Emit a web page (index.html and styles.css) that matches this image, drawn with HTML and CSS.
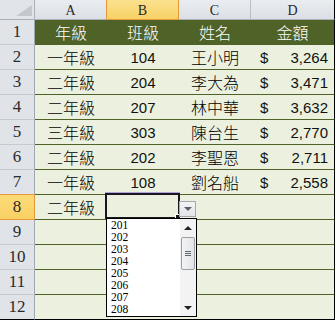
FILE: index.html
```html
<!DOCTYPE html>
<html lang="zh-Hant">
<head>
<meta charset="utf-8">
<title>Sheet</title>
<link rel="stylesheet" href="styles.css">
</head>
<body>
<div class="sheet">
  <div class="grid">
    <div class="corner"><svg width="34" height="19" viewBox="0 0 34 19"><polygon points="16,16 32,16 32,5" fill="#C3C8CE"/></svg></div>
    <div class="ch pre">A</div>
    <div class="ch selcol">B</div>
    <div class="ch">C</div>
    <div class="ch endc">D</div>

    <div class="rh">1</div>
    <div class="c hd">年級</div><div class="c hd">班級</div><div class="c hd">姓名</div><div class="c hd endc">金額</div>

    <div class="rh">2</div>
    <div class="c">一年級</div><div class="c num">104</div><div class="c">王小明</div><div class="c money endc"><span>$</span><span>3,264</span></div>

    <div class="rh">3</div>
    <div class="c">二年級</div><div class="c num">204</div><div class="c">李大為</div><div class="c money endc"><span>$</span><span>3,471</span></div>

    <div class="rh">4</div>
    <div class="c">二年級</div><div class="c num">207</div><div class="c">林中華</div><div class="c money endc"><span>$</span><span>3,632</span></div>

    <div class="rh">5</div>
    <div class="c">三年級</div><div class="c num">303</div><div class="c">陳台生</div><div class="c money endc"><span>$</span><span>2,770</span></div>

    <div class="rh">6</div>
    <div class="c">二年級</div><div class="c num">202</div><div class="c">李聖恩</div><div class="c money endc"><span>$</span><span>2,711</span></div>

    <div class="rh pre-sel">7</div>
    <div class="c">一年級</div><div class="c num">108</div><div class="c">劉名船</div><div class="c money endc"><span>$</span><span>2,558</span></div>

    <div class="rh selrow">8</div>
    <div class="c">二年級</div><div class="c"></div><div class="c"></div><div class="c endc"></div>

    <div class="rh">9</div>
    <div class="c"></div><div class="c"></div><div class="c"></div><div class="c endc"></div>

    <div class="rh">10</div>
    <div class="c"></div><div class="c"></div><div class="c"></div><div class="c endc"></div>

    <div class="rh">11</div>
    <div class="c"></div><div class="c"></div><div class="c"></div><div class="c endc"></div>

    <div class="rh endr">12</div>
    <div class="c endr"></div><div class="c endr"></div><div class="c endr"></div><div class="c endc endr"></div>
  </div>

  <div class="selection"></div>
  <div class="fill-handle"></div>
  <div class="dd-btn"><span class="tri-down"></span></div>
  <div class="dd-list">
    <div class="items">
      <div class="item">201</div>
      <div class="item">202</div>
      <div class="item">203</div>
      <div class="item">204</div>
      <div class="item">205</div>
      <div class="item">206</div>
      <div class="item">207</div>
      <div class="item">208</div>
    </div>
    <div class="scrollbar">
      <div class="sb-btn"><span class="tri-up"></span></div>
      <div class="sb-track">
        <div class="thumb"><span class="grip"></span><span class="grip"></span><span class="grip"></span></div>
      </div>
      <div class="sb-btn"><span class="tri-down small"></span></div>
    </div>
  </div>
</div>
</body>
</html>
```

FILE: styles.css
```css
* { box-sizing: border-box; }
html, body { margin: 0; padding: 0; background: #fff; }

.sheet {
  position: relative;
  width: 335px;
  height: 320px;
  overflow: hidden;
}

.grid {
  display: grid;
  grid-template-columns: 35px 72px 72px 72px 84px;
  grid-template-rows: 20px repeat(12, 25px);
}

.corner {
  background: #E1E5EA;
  border-right: 1px solid #A9B0B9;
  border-bottom: 1px solid #A9B0B9;
  display: flex;
}

.ch {
  background: linear-gradient(#E9ECF0, #DCE0E6);
  border-right: 1px solid #B9C0C8;
  border-bottom: 1px solid #A9B0B9;
  display: flex;
  align-items: center;
  justify-content: center;
  padding-top: 2px;
  font-family: "Liberation Serif", serif;
  font-size: 14px;
  color: #2A2A2A;
}
.ch.pre { border-right-color: #E49A3A; }
.ch.selcol {
  background: linear-gradient(#FBE18E, #F7D165);
  border-right-color: #E49A3A;
  border-bottom-color: #E49A3A;
}
.ch.endc { border-right-color: #000; }

.rh {
  background: #E0E4E9;
  border-right: 1px solid #9EA7B1;
  border-bottom: 1px solid #C6CBD2;
  display: flex;
  align-items: center;
  justify-content: center;
  font-family: "Liberation Serif", serif;
  font-size: 17px;
  color: #2A2A2A;
}
.rh.pre-sel { border-bottom-color: #E49A3A; }
.rh.selrow {
  background: linear-gradient(#FCDB77, #F9D164);
  border-right-color: #E49A3A;
  border-bottom-color: #E49A3A;
}
.rh.endr { border-bottom-color: #000; }

.c {
  background: #EBF1DE;
  border-bottom: 1px solid #4F6228;
  display: flex;
  align-items: center;
  justify-content: center;
  font-family: "Noto Sans CJK TC", sans-serif;
  font-weight: 300;
  font-size: 16px;
  color: #000;
}
.c.hd {
  background: #4F6228;
  color: #fff;
}
.c.num {
  font-family: "Liberation Sans", Arial, sans-serif;
  font-weight: 400;
  font-size: 15px;
  color: #111;
}
.c.money {
  justify-content: space-between;
  padding: 0 6px 0 9px;
  font-family: "Liberation Sans", Arial, sans-serif;
  font-weight: 400;
  font-size: 15px;
  color: #111;
}
.c.endc { border-right: 1px solid #000; }
.c.endr { border-bottom-color: #000; }

.selection {
  position: absolute;
  left: 105px;
  top: 193px;
  width: 75px;
  height: 26px;
  border: 2px solid #17171F;
  box-shadow: 0 -1px 0 #B3A6D6;
}
.fill-handle {
  position: absolute;
  left: 175px;
  top: 214px;
  width: 6px;
  height: 6px;
  background: #17171F;
  border: 1px solid #fff;
}

.dd-btn {
  position: absolute;
  left: 179px;
  top: 201px;
  width: 17px;
  height: 16px;
  border: 1px solid #A3A8AE;
  background: linear-gradient(#F2F3F5, #E2E5E9);
  display: flex;
  align-items: center;
  justify-content: center;
}
.tri-down {
  width: 0;
  height: 0;
  border-left: 4px solid transparent;
  border-right: 4px solid transparent;
  border-top: 4px solid #5A6068;
}
.tri-down.small {
  border-top-color: #222;
}
.tri-up {
  width: 0;
  height: 0;
  border-left: 4px solid transparent;
  border-right: 4px solid transparent;
  border-bottom: 4px solid #222;
}

.dd-list {
  position: absolute;
  left: 106px;
  top: 218px;
  width: 91px;
  height: 99px;
  border: 1px solid #000;
  background: #fff;
  display: flex;
}
.items {
  flex: 1;
  padding-left: 4px;
  font-family: "Liberation Serif", serif;
  font-size: 11.5px;
  line-height: 12px;
  color: #000;
}
.item { height: 12px; }

.scrollbar {
  width: 16px;
  display: flex;
  flex-direction: column;
  background: #F3F3F3;
}
.sb-btn {
  height: 17px;
  display: flex;
  align-items: center;
  justify-content: center;
}
.sb-track {
  flex: 1;
  padding: 1px 1px 0 1px;
}
.thumb {
  height: 33px;
  border: 1px solid #9A9FA6;
  border-radius: 2px;
  background: linear-gradient(90deg, #F3F4F5, #E1E3E6);
  display: flex;
  flex-direction: column;
  align-items: center;
  justify-content: center;
  gap: 1px;
}
.grip {
  width: 6px;
  height: 1px;
  background: #5F6670;
}
```
